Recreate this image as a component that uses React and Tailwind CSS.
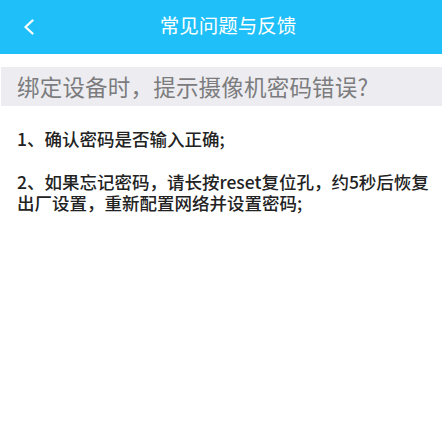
import React from 'react';

const answers = [
  '1、确认密码是否输入正确;',
  '2、如果忘记密码，请长按reset复位孔，约5秒后恢复出厂设置，重新配置网络并设置密码;'
];

const BackIcon = () => (
  <svg width="14" height="16" viewBox="0 0 14 16" fill="none">
    <path d="M10.5 1.5 L3.5 8 L10.5 14.5" stroke="white" strokeWidth="2.3" strokeLinecap="round" strokeLinejoin="round" />
  </svg>
);

const App = () => {
  return (
    <div className="w-[442px] h-[428px] bg-white overflow-hidden font-['Noto_Sans_CJK_SC',sans-serif]">
      <div className="h-[54px] bg-[#1fc0f9] flex items-center">
        <button className="w-[40px] h-full flex items-center pl-[22px] pb-[1px]">
          <BackIcon />
        </button>
        <h1 className="flex-1 text-center text-white text-[19.5px] leading-none pr-[26px] pb-[4px]">常见问题与反馈</h1>
      </div>

      <div className="mt-[13px] h-[39px] bg-[#ededf1] flex items-center pl-[16px] ml-[1px]">
        <p className="text-[22.5px] text-[#7c7c7e] leading-none tracking-[0.2px]">绑定设备时，提示摄像机密码错误?</p>
      </div>

      <div className="pt-[22px] pl-[17px] pr-[6px] flex flex-col gap-[21px]">
        {answers.map((a, i) => (
          <p key={i} className="text-[17.5px] leading-[21.5px] font-medium text-[#222222]">{a}</p>
        ))}
      </div>
    </div>
  );
};

export default App;
